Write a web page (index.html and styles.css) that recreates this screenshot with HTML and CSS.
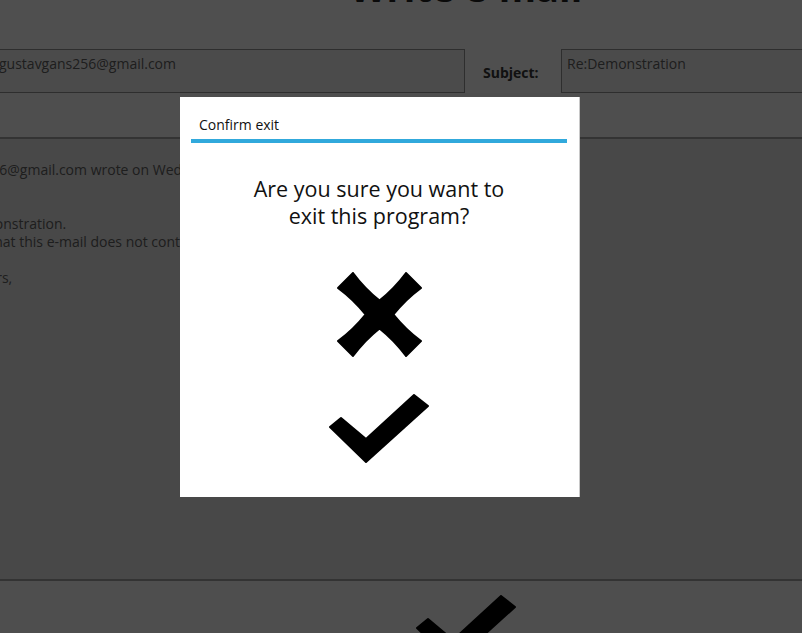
FILE: index.html
```html
<!DOCTYPE html>
<html lang="en">
<head>
<meta charset="utf-8">
<title>Write e-mail</title>
<link rel="stylesheet" href="styles.css">
</head>
<body>
<div class="app">
  <h1 class="title">Write e-mail</h1>
  <div class="fields">
    <span class="label to-label">To:</span>
    <div class="field to-field">gustavgans256@gmail.com</div>
    <span class="label subject-label">Subject:</span>
    <div class="field subject-field">Re:Demonstration</div>
  </div>
  <div class="toolbar"></div>
  <div class="message-body">
    <p class="line">gustavgans256@gmail.com wrote on Wednesday 5 March 2014:</p>
    <p class="line">&nbsp;</p>
    <p class="line">&nbsp;</p>
    <p class="line">This is a demonstration.</p>
    <p class="line">Please note that this e-mail does not contain attachments.</p>
    <p class="line">&nbsp;</p>
    <p class="line">Sincerely yours,</p>
  </div>
  <div class="actions">
    <button class="icon-btn send-btn" aria-label="Send">
      <svg class="check-icon" viewBox="0 0 100 70" width="100" height="70">
        <path d="M1 33 L12 24 L37 45 L85 1 L99 12 L37 68 Z" fill="#000" stroke="#000" stroke-width="2" stroke-linejoin="round"/>
      </svg>
    </button>
  </div>
</div>

<div class="backdrop">
  <div class="dialog" role="dialog" aria-label="Confirm exit">
    <div class="dialog-title">Confirm exit</div>
    <p class="dialog-message">Are you sure you want to<br>exit this program?</p>
    <button class="icon-btn cancel-btn" aria-label="No">
      <svg viewBox="0 0 85 85" width="85" height="85">
        <path d="M42.5 28.5 Q57.5 16.5 69 1 L84 16 Q68.5 27.5 56.5 42.5 Q68.5 57.5 84 69 L69 84 Q57.5 68.5 42.5 56.5 Q27.5 68.5 16 84 L1 69 Q16.5 57.5 28.5 42.5 Q16.5 27.5 1 16 L16 1 Q27.5 16.5 42.5 28.5 Z" fill="#000" stroke="#000" stroke-width="2" stroke-linejoin="round"/>
      </svg>
    </button>
    <button class="icon-btn confirm-btn" aria-label="Yes">
      <svg viewBox="0 0 100 70" width="100" height="70">
        <path d="M1 33 L12 24 L37 45 L85 1 L99 12 L37 68 Z" fill="#000" stroke="#000" stroke-width="2" stroke-linejoin="round"/>
      </svg>
    </button>
  </div>
</div>
</body>
</html>
```

FILE: styles.css
```css
html, body {
  margin: 0;
  padding: 0;
  height: 100%;
  overflow: hidden;
}

body {
  font-family: "Open Sans", "DejaVu Sans", sans-serif;
  background: #c6c6c6;
  color: #4b4b4b;
}

.app {
  width: 1132px;
  margin-left: -100px;
  background: #c6c6c6;
}

.title {
  margin: -37px 0 0;
  font-size: 38px;
  line-height: 48px;
  font-weight: 700;
  text-align: center;
  color: #1a1a1a;
}

.fields {
  margin-top: 38px;
  height: 44px;
  display: flex;
  align-items: center;
}

.label {
  font-size: 14px;
  font-weight: 700;
  color: #2b2b2b;
}

.to-label {
  width: 93px;
  text-align: right;
  box-sizing: border-box;
  padding-right: 16px;
}

.subject-label {
  width: 78px;
  margin-left: 18px;
  padding-top: 3px;
}

.field {
  box-sizing: border-box;
  height: 44px;
  border: 1px solid #737373;
  background: #bcbcbc;
  padding: 4px 5px;
  font-size: 14px;
  line-height: 19px;
  color: #4b4b4b;
  align-self: stretch;
}

.to-field {
  width: 472px;
}

.subject-field {
  flex: 1;
  margin-right: 93px;
}

.toolbar {
  height: 44px;
  border-bottom: 2px solid #808080;
  background: #c3c3c3;
}

.message-body {
  box-sizing: border-box;
  height: 440px;
  background: #b4b4b4;
  padding: 22px 0 0 10px;
  font-size: 14px;
  line-height: 18px;
  color: #4b4b4b;
}

.line {
  margin: 0;
  white-space: nowrap;
}

.actions {
  border-top: 2px solid #808080;
  background: #c3c3c3;
  padding-top: 9px;
  height: 80px;
  display: flex;
  justify-content: center;
}

.icon-btn {
  display: block;
  margin: 0 auto;
  padding: 0;
  border: 0;
  background: none;
  line-height: 0;
}

.icon-btn svg {
  display: block;
}

.send-btn {
  margin: 0;
}

.backdrop {
  position: fixed;
  inset: 0;
  background: rgba(0, 0, 0, 0.6);
}

.dialog {
  position: absolute;
  left: 180px;
  top: 97px;
  width: 400px;
  height: 400px;
  box-sizing: border-box;
  background: #ffffff;
  border-right: 1px solid #c8c8c8;
  padding: 0 12px 0 11px;
  color: #111111;
}

.dialog-title {
  padding: 18px 0 5px 8px;
  font-size: 14px;
  line-height: 19px;
  border-bottom: 4px solid #31a9dc;
}

.dialog-message {
  margin: 32px 0 0;
  font-size: 21.5px;
  line-height: 27px;
  text-align: center;
}

.cancel-btn {
  margin-top: 43px;
}

.confirm-btn {
  margin-top: 37px;
}
```
